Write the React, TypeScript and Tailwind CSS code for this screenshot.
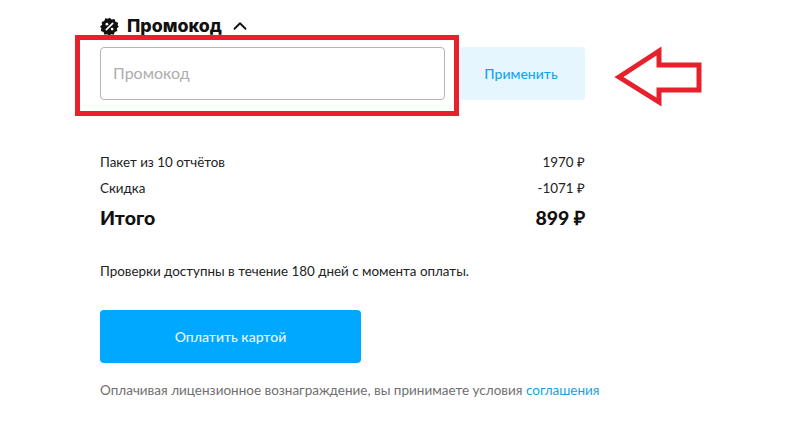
import { ChevronUp } from "lucide-react";

function PromoIcon() {
  return (
    <svg width="19" height="19" viewBox="0 0 24 24" className="shrink-0">
      <path
        fill="#111"
        d="M12 1l2.8 2.2 3.5-.6 1.3 3.3 3.3 1.3-.6 3.5L24 12l-2.7 2.3.6 3.5-3.3 1.3-1.3 3.3-3.5-.6L12 24l-2.8-2.2-3.5.6-1.3-3.3-3.3-1.3.6-3.5L0 12l2.7-2.3-.6-3.5 3.3-1.3 1.3-3.3 3.5.6z"
      />
      <path d="M16 8l-8 8" stroke="#fff" strokeWidth="2.2" strokeLinecap="round" />
      <circle cx="8.7" cy="9" r="1.7" fill="#fff" />
      <circle cx="15.3" cy="15.3" r="1.7" fill="#fff" />
    </svg>
  );
}

function Row({ label, value }: { label: string; value: string }) {
  return (
    <div className="flex h-[26px] items-center justify-between text-[13.4px] text-[#222]">
      <span>{label}</span>
      <span>{value}</span>
    </div>
  );
}

export default function App() {
  return (
    <div className="relative h-[430px] w-[800px] overflow-hidden bg-white pl-[100px] pt-[14px] font-['Lato',sans-serif]">
      <div className="w-[485px]">
        <div className="flex h-[24px] items-center gap-[8px] text-[#111]">
          <PromoIcon />
          <span className="font-['Inter',sans-serif] text-[17.8px] font-extrabold">Промокод</span>
          <ChevronUp size={22} strokeWidth={2} className="-ml-px" />
        </div>

        <div className="mt-[9px] flex gap-[15px]">
          <div className="flex h-[53px] w-[345px] items-center rounded-[4px] border border-[#b5b5b5] pb-[2px] pl-[12px] text-[16px] text-[#adadad]">
            Промокод
          </div>
          <button className="h-[53px] w-[125px] rounded-[4px] bg-[#e5f6fe] pb-[1px] pr-[3px] text-[14px] font-medium text-[#16a5ea]">
            Применить
          </button>
        </div>

        <div className="mt-[49px]">
          <Row label="Пакет из 10 отчётов" value="1970 ₽" />
          <Row label="Скидка" value="-1071 ₽" />
          <div className="mt-[3px] flex h-[28px] items-center justify-between text-[19.5px] font-black text-[#111]">
            <span>Итого</span>
            <span>899 ₽</span>
          </div>
        </div>

        <p className="mt-[29px] text-[13.4px] leading-[20px] text-[#222]">
          Проверки доступны в течение 180 дней с момента оплаты.
        </p>

        <button className="mt-[29px] block h-[53px] w-[261px] rounded-[4px] bg-[#00a8ff] pb-[1px] text-[14px] font-medium text-[#e8f7ff]">
          Оплатить картой
        </button>

        <p className="mt-[17px] whitespace-nowrap text-[13.5px] leading-[20px] text-[#6f6f6f]">
          Оплачивая лицензионное вознаграждение, вы принимаете условия{" "}
          <span className="text-[#1a9fe0]">соглашения</span>
        </p>
      </div>

      {/* red annotation frame and arrow drawn over the screenshot */}
      <div className="absolute left-[75px] top-[35px] h-[81px] w-[384px] border-[5px] border-[#e8202c]" />
      <svg className="absolute left-[610px] top-[44px]" width="100" height="66" viewBox="0 0 100 66">
        <path
          d="M9 33 L49 7 V21 H89 V46 H49 V58 Z"
          fill="none"
          stroke="#e8202c"
          strokeWidth="5"
        />
      </svg>
    </div>
  );
}
